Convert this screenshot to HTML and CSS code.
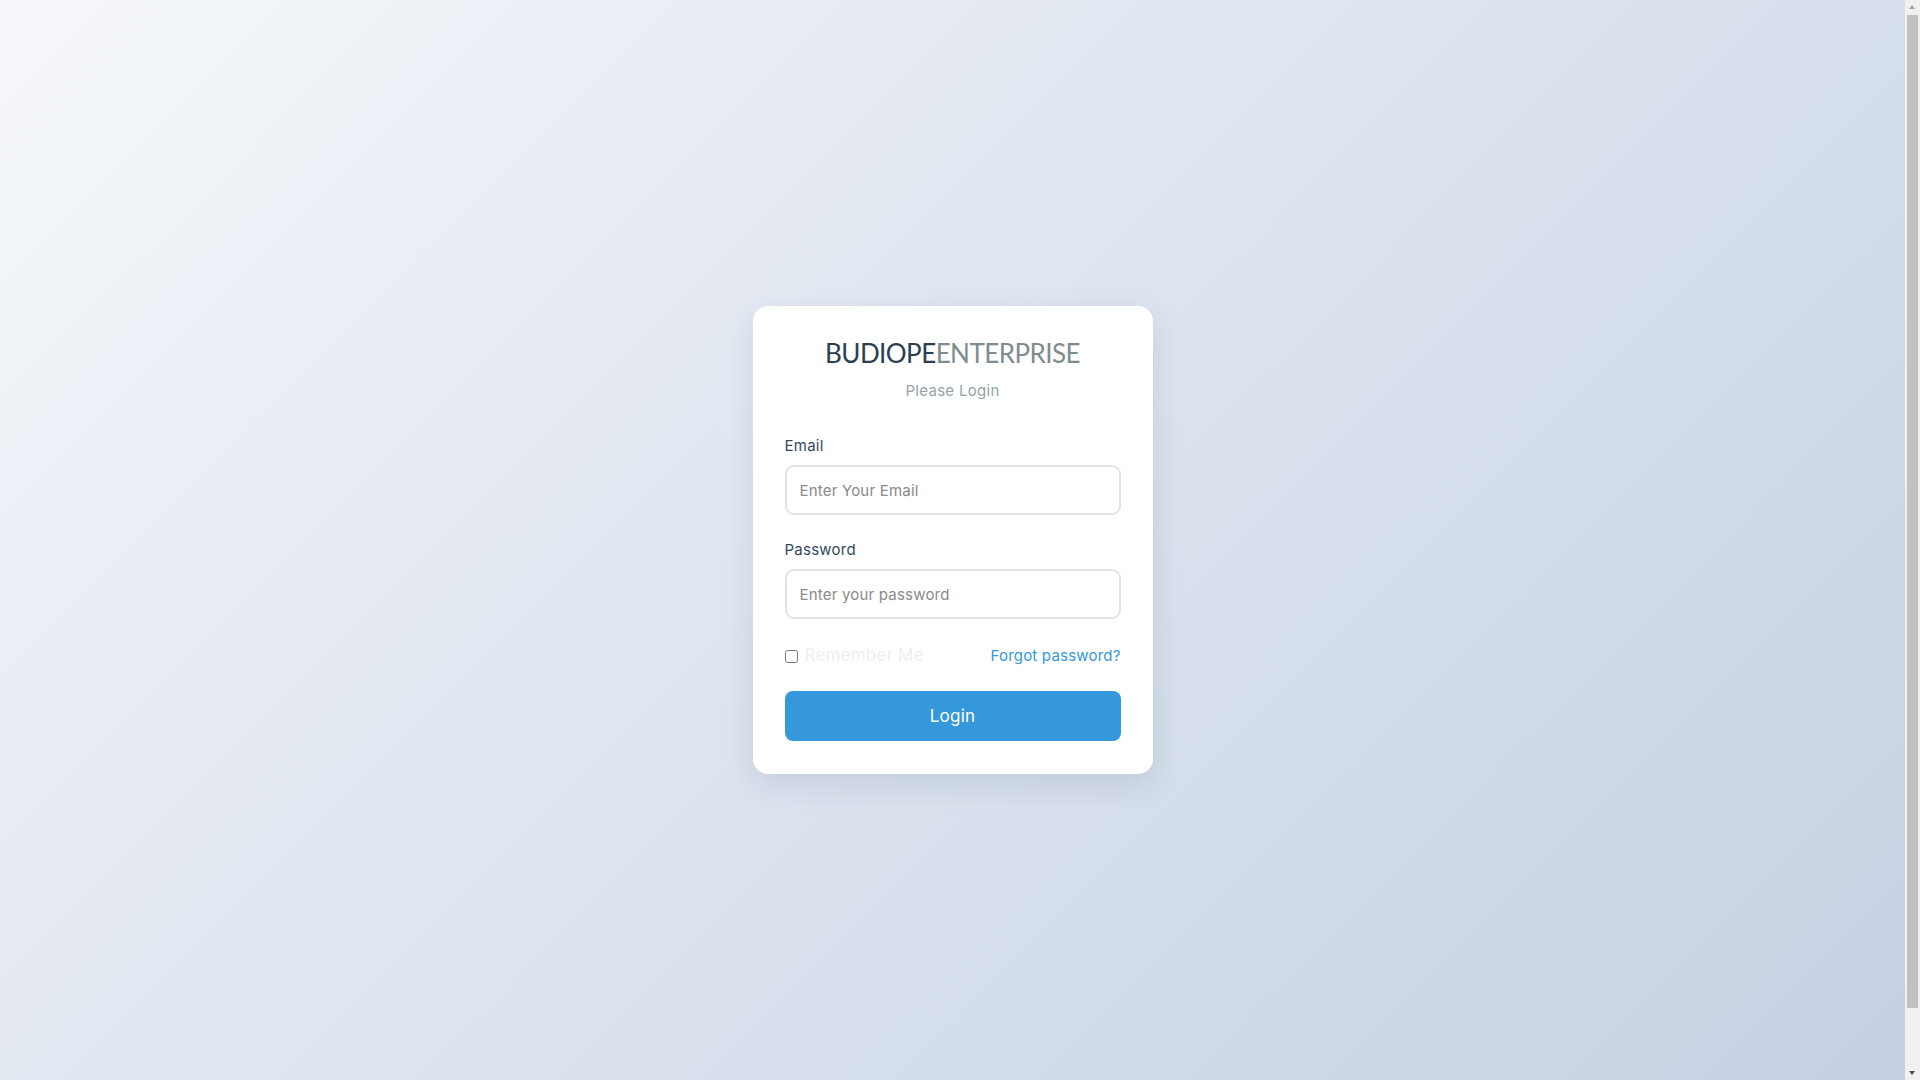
FILE: index.html
```html
<!DOCTYPE html>
<html lang="en">
<head>
<meta charset="utf-8">
<title>Login</title>
<link rel="stylesheet" href="styles.css">
</head>
<body>
<div class="page">
  <form class="card">
    <h1 class="brand"><span class="brand-a">BUDIOPE</span><span class="brand-b">ENTERPRISE</span></h1>
    <p class="subtitle">Please Login</p>
    <div class="field">
      <label class="label" for="email">Email</label>
      <input class="input" id="email" type="email" placeholder="Enter Your Email">
    </div>
    <div class="field">
      <label class="label" for="password">Password</label>
      <input class="input" id="password" type="password" placeholder="Enter your password">
    </div>
    <div class="row">
      <label class="remember"><input type="checkbox" class="check"><span>Remember Me</span></label>
      <a class="forgot" href="#">Forgot password?</a>
    </div>
    <button class="btn" type="button">Login</button>
  </form>
</div>
<div class="spacer"></div>
<div class="scrollbar">
  <span class="arrow arrow-up"></span>
  <span class="thumb"></span>
  <span class="arrow arrow-down"></span>
</div>
</body>
</html>
```
FILE: styles.css
```css
html {
  background: linear-gradient(135deg, #f5f7fa 0%, #c3cfe2 100%);
  min-height: 100%;
}
body {
  margin: 0 15px 0 0;
  font-family: "Inter", "Liberation Sans", sans-serif;
  letter-spacing: 0.25px;
}
.page {
  height: 100vh;
  display: flex;
  align-items: center;
  justify-content: center;
}
.spacer {
  height: 62px;
}
.card {
  width: 400px;
  box-sizing: border-box;
  background: #fff;
  border-radius: 15px;
  padding: 32px 32px 33px;
  box-shadow: 0 10px 30px rgba(40, 60, 100, 0.12);
}
.brand {
  margin: 0;
  text-align: center;
  font-family: "Lato", sans-serif;
  font-weight: 400;
  font-size: 26px;
  line-height: 31px;
  letter-spacing: -0.55px;
}
.brand-a { color: #2c3e50; }
.brand-b { color: #7f8c8d; }
.subtitle {
  margin: 12px 0 0;
  text-align: center;
  color: #95a5a6;
  font-size: 15px;
  line-height: 20px;
  letter-spacing: 0.3px;
}
.field {
  margin-top: 35px;
}
.field + .field {
  margin-top: 25px;
}
.label {
  display: block;
  color: #34495e;
  font-size: 15px;
  line-height: 20px;
  margin-bottom: 9px;
}
.input {
  display: block;
  width: 100%;
  box-sizing: border-box;
  height: 50px;
  border: 2px solid #e3e3e3;
  border-radius: 9px;
  padding: 0 13px;
  font-family: inherit;
  font-size: 15px;
  letter-spacing: 0.2px;
  color: #333;
  background: #fff;
  outline: none;
}
.input::placeholder {
  color: #8a8a8a;
}
.row {
  display: flex;
  justify-content: space-between;
  align-items: center;
  margin-top: 22px;
  height: 28px;
}
.remember {
  display: flex;
  align-items: center;
  color: #efefef;
  font-size: 17px;
  letter-spacing: 0.2px;
}
.check {
  width: 13px;
  height: 13px;
  margin: 2px 7px 0 0;
}
.forgot {
  color: #3498db;
  text-decoration: none;
  font-size: 15px;
  letter-spacing: 0.2px;
}
.btn {
  display: block;
  width: 100%;
  height: 50px;
  margin-top: 22px;
  border: 0;
  border-radius: 8px;
  background: #3498db;
  color: #fff;
  font-family: inherit;
  font-size: 17px;
  letter-spacing: 0.2px;
}
.scrollbar {
  position: fixed;
  top: 0;
  right: 0;
  width: 15px;
  height: 100vh;
  background: #f1f1f1;
}
.thumb {
  position: absolute;
  left: 2px;
  right: 2px;
  top: 15px;
  bottom: 72px;
  background: #c1c1c1;
}
.arrow {
  position: absolute;
  left: 4px;
  width: 0;
  height: 0;
  border-left: 3.5px solid transparent;
  border-right: 3.5px solid transparent;
}
.arrow-up {
  top: 5px;
  border-bottom: 4px solid #a3a3a3;
}
.arrow-down {
  bottom: 5px;
  border-top: 4px solid #505050;
}
```
